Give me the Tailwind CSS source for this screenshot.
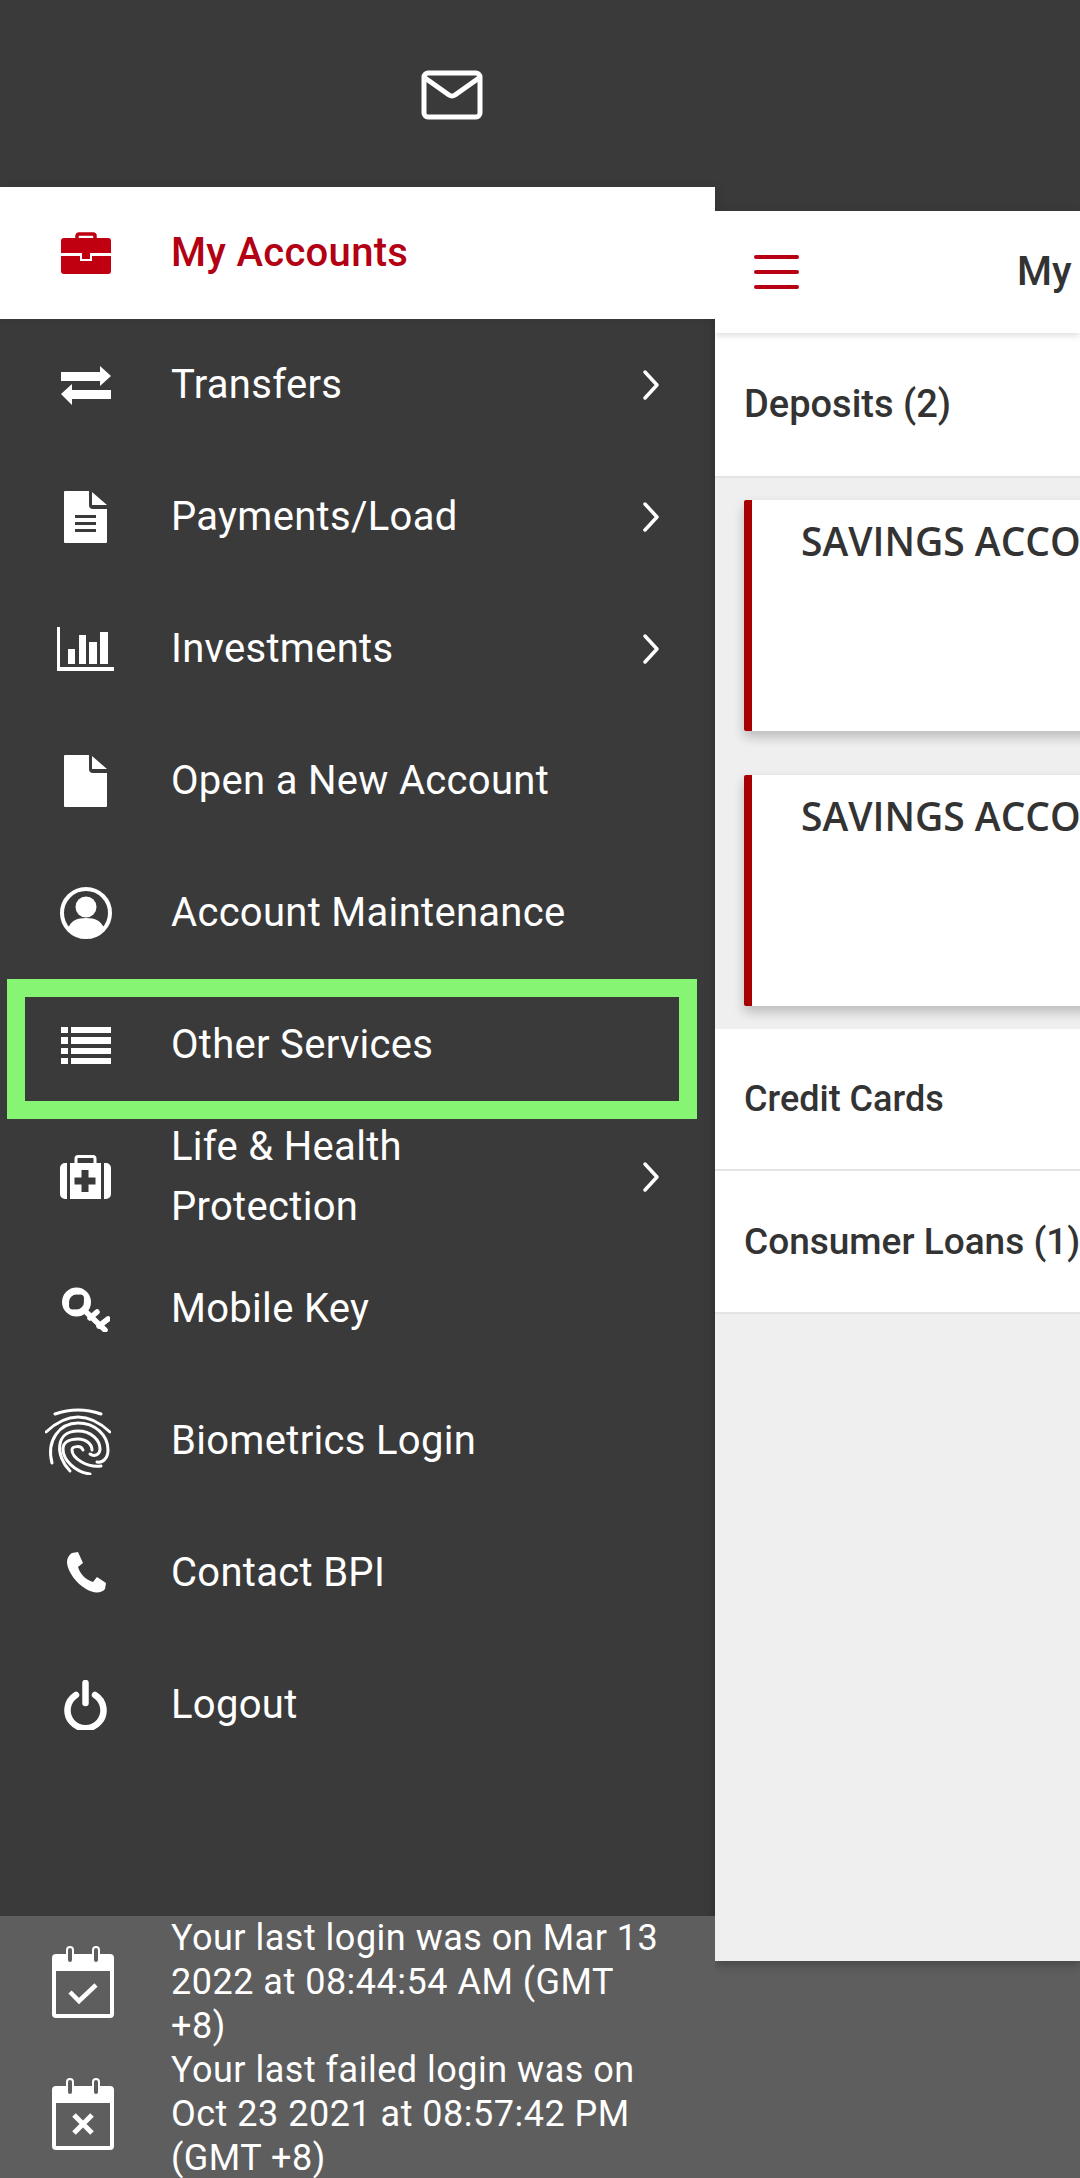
<!DOCTYPE html>
<html lang="en">
<head>
    <meta charset="UTF-8">
    <meta name="viewport" content="width=device-width, initial-scale=1.0">
    <title>BPI Menu</title>
    <script src="https://cdn.jsdelivr.net/npm/@tailwindcss/browser@4"></script>
</head>
<body class="bg-[#3a3a3a]">
<div class="relative flex w-[1080px] h-[2178px] overflow-hidden font-['Roboto',sans-serif] text-[40px] tracking-[0.3px] text-white">
    <!-- Sidebar -->
    <aside class="relative z-10 w-[715px] shrink-0 flex flex-col">
        <div class="h-[187px] pl-[421px] pt-[70px]">
            <svg width="62" height="50" viewBox="0 0 62 50" fill="none" stroke="#fff" stroke-width="5" stroke-linejoin="round" stroke-linecap="round"><rect x="3" y="3" width="56" height="44" rx="4"/><path d="M4 8l24 17q3 2 6 0l24-17"/></svg>
        </div>

        <nav class="flex flex-col">
            <!-- My Accounts -->
            <div class="flex items-center h-[132px] bg-white text-[#b30013] font-medium shadow-[4px_0_8px_rgba(0,0,0,0.08)]">
                <div class="w-[171px] flex justify-center">
                    <svg width="50" height="42" viewBox="0 0 50 42"><rect x="16" y="2" width="18" height="9" rx="2" fill="none" stroke="#c00010" stroke-width="3.5"/><path d="M3 6h44a3 3 0 0 1 3 3v12H0V9a3 3 0 0 1 3-3zM0 24h19v5h12v-5h19v15a3 3 0 0 1-3 3H3a3 3 0 0 1-3-3z" fill="#c00010"/><rect x="21" y="21" width="8" height="6" fill="#c00010"/></svg>
                </div>
                <span>My Accounts</span>
            </div>
            <!-- Transfers -->
            <div class="flex items-center h-[132px]">
                <div class="w-[171px] flex justify-center">
                    <svg width="50" height="39" viewBox="0 0 50 39" fill="#fff"><path d="M0 6h39V0l11 10-11 10v-5H0zM50 24H11v-6L0 28l11 11v-6h39z"/></svg>
                </div>
                <span class="flex-1">Transfers</span>
                <svg class="mr-[55px]" width="18" height="32" viewBox="0 0 18 32" fill="none" stroke="#fff" stroke-width="3.5" stroke-linecap="round" stroke-linejoin="round"><path d="M3 3l12 13L3 29"/></svg>
            </div>
            <!-- Payments/Load -->
            <div class="flex items-center h-[132px]">
                <div class="w-[171px] flex justify-center">
                    <svg width="43" height="52" viewBox="0 0 43 52"><path d="M1 0h24v14q0 4 4 4h14v33a1 1 0 0 1-1 1H1a1 1 0 0 1-1-1V1a1 1 0 0 1 1-1z" fill="#fff"/><path d="M28 1l15 13H28z" fill="#fff"/><path d="M11 24h21v3H11zM11 31h21v3H11zM11 38h21v3H11z" fill="#3a3a3a"/></svg>
                </div>
                <span class="flex-1">Payments/Load</span>
                <svg class="mr-[55px]" width="18" height="32" viewBox="0 0 18 32" fill="none" stroke="#fff" stroke-width="3.5" stroke-linecap="round" stroke-linejoin="round"><path d="M3 3l12 13L3 29"/></svg>
            </div>
            <!-- Investments -->
            <div class="flex items-center h-[132px]">
                <div class="w-[171px] flex justify-center">
                    <svg width="57" height="44" viewBox="0 0 57 44" fill="#fff"><path d="M0 0h3v40h54v4H0z"/><path d="M11 22h7v15h-7zM22 8h7v29h-7zM32 15h8v22h-8zM43 5h8v32h-8z"/></svg>
                </div>
                <span class="flex-1">Investments</span>
                <svg class="mr-[55px]" width="18" height="32" viewBox="0 0 18 32" fill="none" stroke="#fff" stroke-width="3.5" stroke-linecap="round" stroke-linejoin="round"><path d="M3 3l12 13L3 29"/></svg>
            </div>
            <!-- Open a New Account -->
            <div class="flex items-center h-[132px]">
                <div class="w-[171px] flex justify-center">
                    <svg width="43" height="52" viewBox="0 0 43 52" fill="#fff"><path d="M1 0h24v14q0 4 4 4h14v33a1 1 0 0 1-1 1H1a1 1 0 0 1-1-1V1a1 1 0 0 1 1-1z"/><path d="M28 1l15 13H28z"/></svg>
                </div>
                <span>Open a New Account</span>
            </div>
            <!-- Account Maintenance -->
            <div class="flex items-center h-[132px]">
                <div class="w-[171px] flex justify-center">
                    <svg width="52" height="52" viewBox="0 0 52 52"><circle cx="26" cy="26" r="24" fill="none" stroke="#fff" stroke-width="4"/><circle cx="26" cy="20" r="10.5" fill="#fff"/><path d="M8 42c2-8 9-11 18-11s16 3 18 11a24 24 0 0 1-36 0z" fill="#fff"/></svg>
                </div>
                <span>Account Maintenance</span>
            </div>
            <!-- Other Services -->
            <div class="flex items-center h-[132px]">
                <div class="w-[171px] flex justify-center">
                    <svg width="50" height="37" viewBox="0 0 50 37" fill="#fff"><path d="M0 0h7v6H0zM10 0h40v6H10zM0 10h7v7H0zM10 10h40v7H10zM0 21h7v6H0zM10 21h40v6H10zM0 31h7v6H0zM10 31h40v6H10z"/></svg>
                </div>
                <span>Other Services</span>
            </div>
            <!-- Life & Health Protection -->
            <div class="flex items-center h-[132px]">
                <div class="w-[171px] flex justify-center">
                    <svg width="51" height="44" viewBox="0 0 51 44" fill="#fff"><rect x="16" y="1.5" width="19" height="9" rx="2" fill="none" stroke="#fff" stroke-width="3"/><path d="M5 8h2v36H5a5 5 0 0 1-5-5V13a5 5 0 0 1 5-5zM10 8h31v36H10zM44 8h2a5 5 0 0 1 5 5v26a5 5 0 0 1-5 5h-2z"/><path d="M21.500 15h7v7.500h7v7h-7V37h-7v-7.500h-7v-7h7z" fill="#3a3a3a"/></svg>
                </div>
                <span class="flex-1 leading-[60px]">Life &amp; Health<br>Protection</span>
                <svg class="mr-[55px]" width="18" height="32" viewBox="0 0 18 32" fill="none" stroke="#fff" stroke-width="3.5" stroke-linecap="round" stroke-linejoin="round"><path d="M3 3l12 13L3 29"/></svg>
            </div>
            <!-- Mobile Key -->
            <div class="flex items-center h-[132px]">
                <div class="w-[171px] flex justify-center">
                    <svg width="48" height="45" viewBox="0 0 48 45"><circle cx="14.500" cy="15" r="11" fill="none" stroke="#fff" stroke-width="7"/><circle cx="11" cy="18.500" r="4" fill="#3a3a3a"/><circle cx="18" cy="11.500" r="4" fill="#3a3a3a"/><circle cx="14.500" cy="15" r="3" fill="#3a3a3a"/><path d="M23 24l20 19M35 25l-7 6M46 32l-9 7" fill="none" stroke="#fff" stroke-width="5.500" stroke-linecap="round"/></svg>
                </div>
                <span>Mobile Key</span>
            </div>
            <!-- Biometrics Login -->
            <div class="flex items-center h-[132px]">
                <div class="w-[171px] flex justify-center -translate-x-[8px]">
                    <svg width="66" height="67" viewBox="0 0 66 67" fill="none" stroke="#fff" stroke-width="3" stroke-linecap="round"><path d="M10 6Q33 -2 56 6"/><path d="M1 24Q33 -6 65 24"/><path d="M7 55C1 32 15 15 33 15C50 15 63 27 63 42C63 50 58 55 52 54"/><path d="M25 63C10 48 10 23 33 23C46 23 55 32 55 41C55 47 49 49 45 46"/><path d="M45 66C30 64 18 52 18 41C18 34 25 31 33 31C41 31 47 36 47 42"/><path d="M56 58C42 60 27 50 27 42C27 38 36 37 38 42"/></svg>
                </div>
                <span>Biometrics Login</span>
            </div>
            <!-- Contact BPI -->
            <div class="flex items-center h-[132px]">
                <div class="w-[171px] flex justify-center">
                    <svg width="40" height="42" viewBox="0 0 40 42" fill="#fff"><path d="M6 1L12 0L17 11L12 15C14 22 20 28 27 30L31 25L40 31L39 37C36 41 28 42 20 37C10 31 2 20 1 11C1 6 3 3 6 1Z"/></svg>
                </div>
                <span>Contact BPI</span>
            </div>
            <!-- Logout -->
            <div class="flex items-center h-[132px]">
                <div class="w-[171px] flex justify-center">
                    <svg width="43" height="50" viewBox="0 0 43 50" fill="none" stroke="#fff" stroke-width="6.500" stroke-linecap="round"><path d="M12 15a18 18 0 1 0 19 0"/><path d="M21.500 3v20"/></svg>
                </div>
                <span>Logout</span>
            </div>
        </nav>

        <!-- Login info -->
        <div class="mt-auto h-[262px] bg-[#5e5e5e] text-[36px] leading-[44px] tracking-[0.5px] text-white">
            <div class="flex items-center h-[132px]">
                <div class="w-[171px] flex justify-center -translate-x-[3px]">
                    <svg width="62" height="72" viewBox="0 0 62 72"><path d="M4 8h54a4 4 0 0 1 4 4v56a4 4 0 0 1-4 4H4a4 4 0 0 1-4-4V12a4 4 0 0 1 4-4z" fill="#fff"/><rect x="4" y="25" width="54" height="43" fill="#5e5e5e"/><rect x="15" y="1" width="6" height="16" rx="3" fill="#5e5e5e" stroke="#fff" stroke-width="2"/><rect x="41" y="1" width="6" height="16" rx="3" fill="#5e5e5e" stroke="#fff" stroke-width="2"/><path d="M18 46l9 9 17-16" fill="none" stroke="#fff" stroke-width="4.500"/></svg>
                </div>
                <p>Your last login was on Mar 13<br>2022 at 08:44:54 AM (GMT<br>+8)</p>
            </div>
            <div class="flex items-center h-[132px]">
                <div class="w-[171px] flex justify-center -translate-x-[3px]">
                    <svg width="62" height="72" viewBox="0 0 62 72"><path d="M4 8h54a4 4 0 0 1 4 4v56a4 4 0 0 1-4 4H4a4 4 0 0 1-4-4V12a4 4 0 0 1 4-4z" fill="#fff"/><rect x="4" y="25" width="54" height="43" fill="#5e5e5e"/><rect x="15" y="1" width="6" height="16" rx="3" fill="#5e5e5e" stroke="#fff" stroke-width="2"/><rect x="41" y="1" width="6" height="16" rx="3" fill="#5e5e5e" stroke="#fff" stroke-width="2"/><path d="M22 37l18 18M40 37L22 55" fill="none" stroke="#fff" stroke-width="5"/></svg>
                </div>
                <p>Your last failed login was on<br>Oct 23 2021 at 08:57:42 PM<br>(GMT +8)</p>
            </div>
        </div>
    </aside>

    <!-- Accounts panel -->
    <main class="flex-1 min-w-0 pt-[211px] bg-[linear-gradient(#3a3a3a_1916px,#5e5e5e_1916px)]">
        <div class="h-[1750px] bg-[#efefef] shadow-[0_4px_10px_rgba(0,0,0,0.25)] text-[#333] tracking-normal whitespace-nowrap overflow-hidden">
            <div class="relative z-10 flex items-center h-[122px] bg-white shadow-[0_3px_6px_rgba(0,0,0,0.12)]">
                <div class="ml-[39px] shrink-0 flex flex-col gap-[11px] w-[45px]">
                    <div class="h-[4px] rounded-full bg-[#b80013]"></div>
                    <div class="h-[4px] rounded-full bg-[#b80013]"></div>
                    <div class="h-[4px] rounded-full bg-[#b80013]"></div>
                </div>
                <span class="ml-[218px] font-medium">My Accounts</span>
            </div>
            <div class="flex items-center h-[145px] pl-[29px] bg-white border-b-2 border-[#e4e4e4] font-medium text-[38px]">Deposits (2)</div>
            <div class="px-[29px] pt-[22px] pb-[23px] flex flex-col gap-[44px]">
                <div class="h-[231px] w-[600px] bg-white border-l-[8px] border-[#a80000] rounded-l-[2px] shadow-[0_6px_12px_rgba(0,0,0,0.22)] pl-[49px] pt-[12px] font-['Open_Sans',sans-serif] font-semibold text-[39px]">SAVINGS ACCOUNT</div>
                <div class="h-[231px] w-[600px] bg-white border-l-[8px] border-[#a80000] rounded-l-[2px] shadow-[0_6px_12px_rgba(0,0,0,0.22)] pl-[49px] pt-[12px] font-['Open_Sans',sans-serif] font-semibold text-[39px]">SAVINGS ACCOUNT</div>
            </div>
            <div class="flex items-center h-[142px] pl-[29px] bg-white border-b-2 border-[#e4e4e4] font-medium text-[36px]">Credit Cards</div>
            <div class="flex items-center h-[143px] pl-[29px] bg-white border-b-2 border-[#e4e4e4] font-medium text-[37px]">Consumer Loans (1)</div>
        </div>
    </main>

    <!-- Highlight annotation -->
    <div class="absolute z-20 left-[7px] top-[979px] w-[690px] h-[140px] border-[18px] border-[#86f573]"></div>
</div>
</body>
</html>
